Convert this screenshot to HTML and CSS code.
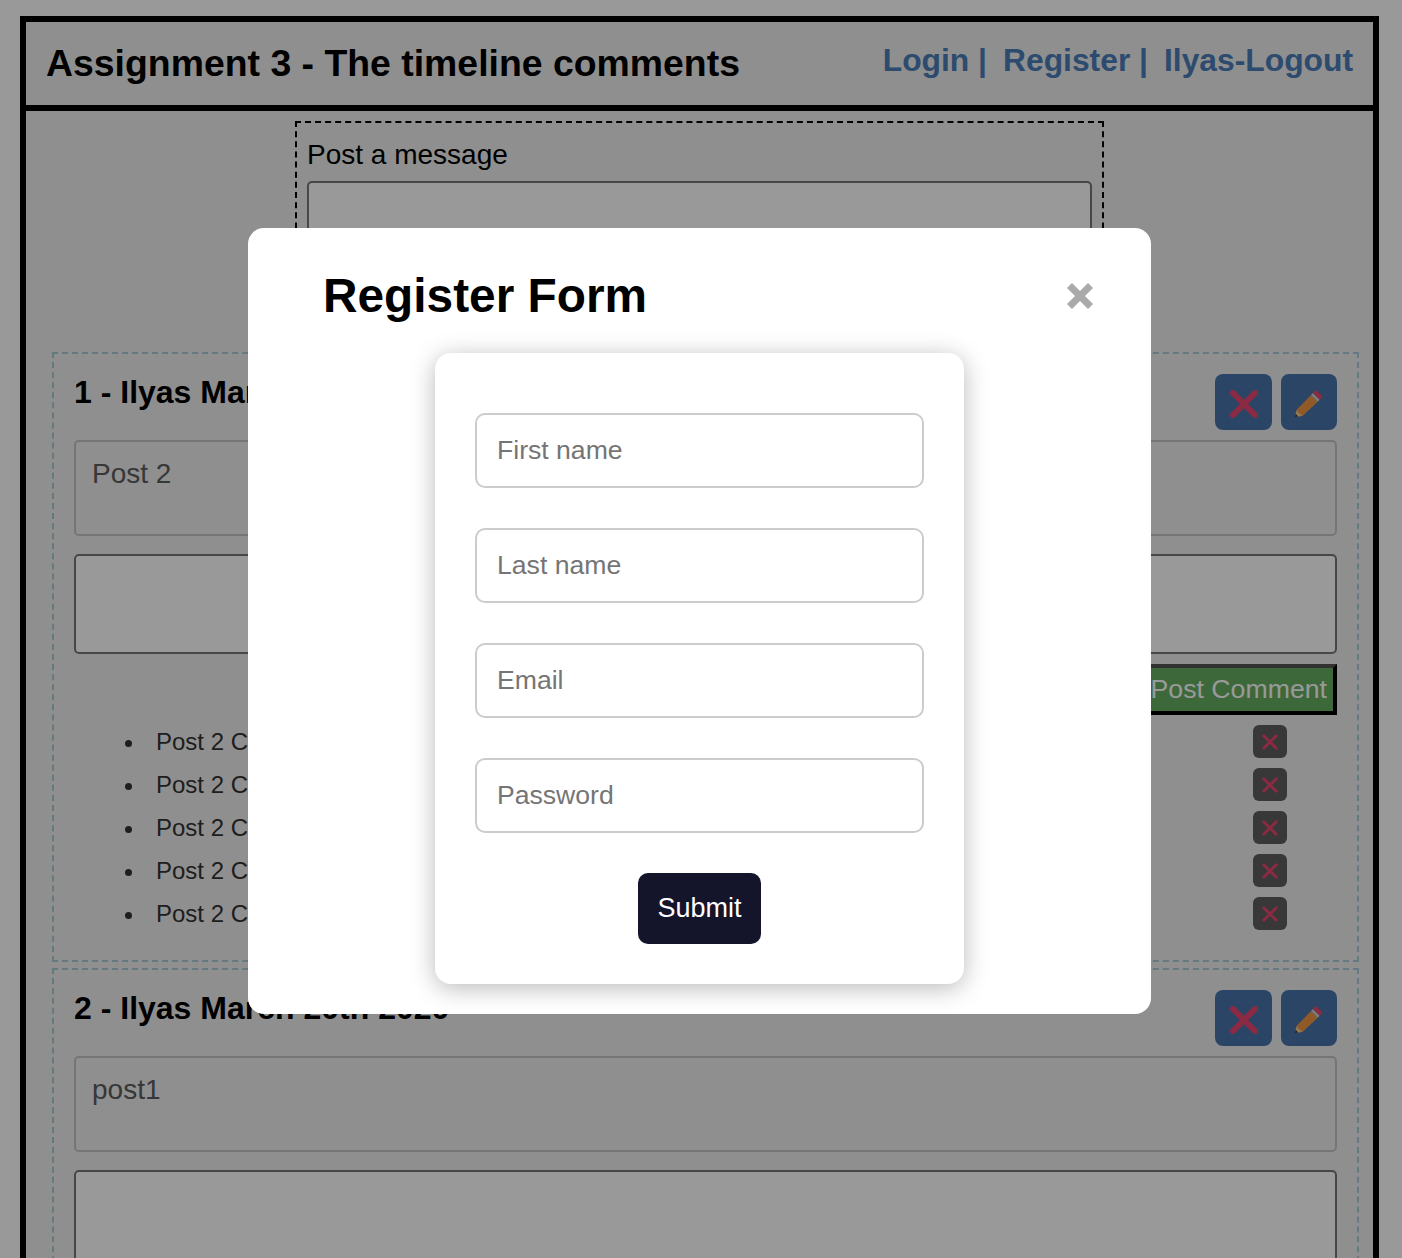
FILE: index.html
```html
<!DOCTYPE html>
<html lang="en">
<head>
  <meta charset="UTF-8" />
  <title>Assignment 3 - The timeline comments</title>
  <link rel="stylesheet" href="styles.css">
</head>
<body>

  <div class="page">
    <header class="top-bar">
      <h1>Assignment 3 - The timeline comments</h1>
      <nav class="top-links">
        <a href="#">Login |</a>
        <a href="#">Register |</a>
        <a href="#">Ilyas-Logout</a>
      </nav>
    </header>

    <main>
      <form class="post-form">
        <label for="new-post">Post a message</label>
        <textarea id="new-post"></textarea>
      </form>

      <!-- Post 1 -->
      <section class="post">
        <div class="post-head">
          <h3>1 - Ilyas March 20th 2020</h3>
          <div class="post-actions">
            <button type="button" class="icon-button wide"><svg class="icon-x" viewBox="0 0 28 28"><path d="M3 3 L25 25 M25 3 L3 25"/></svg></button>
            <button type="button" class="icon-button"><svg class="icon-pencil" viewBox="0 0 28 28"><path class="pencil-body" d="M16 6 L22.700 12.700 L7.500 27 L1.500 21 Z"/><path class="pencil-band" d="M18 4 L24.700 10.700 L22.700 12.700 L16 6 Z"/><path class="pencil-rubber" d="M21 1 L27.700 7.700 L24.700 10.700 L18 4 Z"/><path class="pencil-wood" d="M1.500 21 L7.500 27 L0 28 Z"/><path class="pencil-tip" d="M0 28 L0.700 25 L3 27.500 Z"/></svg></button>
          </div>
        </div>
        <div class="post-text">Post 2</div>
        <textarea class="comment-box"></textarea>
        <div class="comment-submit"><button type="button" class="post-comment">Post Comment</button></div>
        <ul class="comments">
          <li><button type="button" class="comment-delete"><svg class="icon-x" viewBox="0 0 28 28"><path d="M3 3 L25 25 M25 3 L3 25"/></svg></button>Post 2 Comment 5</li>
          <li><button type="button" class="comment-delete"><svg class="icon-x" viewBox="0 0 28 28"><path d="M3 3 L25 25 M25 3 L3 25"/></svg></button>Post 2 Comment 4</li>
          <li><button type="button" class="comment-delete"><svg class="icon-x" viewBox="0 0 28 28"><path d="M3 3 L25 25 M25 3 L3 25"/></svg></button>Post 2 Comment 3</li>
          <li><button type="button" class="comment-delete"><svg class="icon-x" viewBox="0 0 28 28"><path d="M3 3 L25 25 M25 3 L3 25"/></svg></button>Post 2 Comment 2</li>
          <li><button type="button" class="comment-delete"><svg class="icon-x" viewBox="0 0 28 28"><path d="M3 3 L25 25 M25 3 L3 25"/></svg></button>Post 2 Comment 1</li>
        </ul>
      </section>

      <!-- Post 2 -->
      <section class="post">
        <div class="post-head">
          <h3>2 - Ilyas March 20th 2020</h3>
          <div class="post-actions">
            <button type="button" class="icon-button wide"><svg class="icon-x" viewBox="0 0 28 28"><path d="M3 3 L25 25 M25 3 L3 25"/></svg></button>
            <button type="button" class="icon-button"><svg class="icon-pencil" viewBox="0 0 28 28"><path class="pencil-body" d="M16 6 L22.700 12.700 L7.500 27 L1.500 21 Z"/><path class="pencil-band" d="M18 4 L24.700 10.700 L22.700 12.700 L16 6 Z"/><path class="pencil-rubber" d="M21 1 L27.700 7.700 L24.700 10.700 L18 4 Z"/><path class="pencil-wood" d="M1.500 21 L7.500 27 L0 28 Z"/><path class="pencil-tip" d="M0 28 L0.700 25 L3 27.500 Z"/></svg></button>
          </div>
        </div>
        <div class="post-text">post1</div>
        <textarea class="comment-box"></textarea>
      </section>
    </main>
  </div>

  <!-- Register Modal -->
  <div class="modal-back">
    <div class="modal">
      <div class="modal-head">
        <h2>Register Form</h2>
        <button type="button" class="modal-close" aria-label="Close"><svg viewBox="0 0 28 28"><path d="M3.500 3.500 L24.500 24.500 M24.500 3.500 L3.500 24.500"/></svg></button>
      </div>
      <form class="register-form">
        <input type="text" placeholder="First name" />
        <input type="text" placeholder="Last name" />
        <input type="email" placeholder="Email" />
        <input type="password" placeholder="Password" />
        <button type="submit">Submit</button>
      </form>
    </div>
  </div>

</body>
</html>
```

FILE: styles.css
```css
html, body {
  height: 100%;
  overflow: hidden;
}

body {
  margin: 0;
  padding: 16px 23px 0 20px;
  box-sizing: border-box;
  background: white;
  font-family: "Liberation Sans", Arial, sans-serif;
  color: black;
}

.page {
  border: 6px solid black;
  background: #efefef;
}

.top-bar {
  display: flex;
  justify-content: space-between;
  height: 89px;
  padding: 0 20px;
  box-sizing: border-box;
  border-bottom: 6px solid black;
}

.top-bar h1 {
  margin: 21px 0 0;
  font-size: 37.400px;
  line-height: 41px;
}

.top-links {
  display: flex;
  gap: 16px;
  margin-top: 20px;
  font-size: 31.800px;
  font-weight: bold;
  line-height: 37px;
}

.top-links a {
  color: #4b7db8;
  text-decoration: none;
}

.post-form {
  width: 809px;
  height: 219px;
  box-sizing: border-box;
  margin: 10px auto 12px;
  padding: 12px 10px 10px;
  border: 2px dashed black;
}

.post-form label {
  display: block;
  font-size: 28px;
  line-height: 40px;
}

.post-form textarea {
  display: block;
  width: 100%;
  height: 100px;
  box-sizing: border-box;
  margin-top: 6px;
  border: 2px solid #777;
  border-radius: 5px;
  background: white;
  resize: none;
}

.post {
  margin: 0 14px 6px 26px;
  padding: 20px;
  border: 2px dashed #a9cad6;
}

.post-head {
  display: flex;
  justify-content: space-between;
  align-items: flex-start;
}

.post-head h3 {
  margin: 0;
  font-size: 32px;
  line-height: 37px;
}

.post-actions {
  display: flex;
  gap: 9px;
}

.icon-button {
  display: flex;
  align-items: center;
  justify-content: center;
  width: 56px;
  height: 56px;
  padding: 0;
  border: none;
  border-radius: 8px;
  background: #4674ab;
}

.icon-button.wide { width: 57px; }

.icon-x {
  width: 28px;
  height: 28px;
  margin-top: 3px;
  fill: none;
  stroke: #e94671;
  stroke-width: 6;
  stroke-linecap: round;
}

.icon-pencil {
  width: 28px;
  height: 28px;
  margin-top: 2px;
}

.pencil-body { fill: #f09743; }
.pencil-band { fill: #cfcfcf; }
.pencil-rubber { fill: #e94671; }
.pencil-wood { fill: #f3c684; }
.pencil-tip { fill: #222; }

.post-text {
  height: 96px;
  box-sizing: border-box;
  margin-top: 10px;
  padding: 16px;
  border: 2px solid #c4c4c4;
  border-radius: 5px;
  color: #5c5c5c;
  font-size: 28px;
  line-height: 32px;
}

.comment-box {
  display: block;
  width: 100%;
  height: 100px;
  box-sizing: border-box;
  margin-top: 18px;
  border: 2px solid #777;
  border-radius: 5px;
  background: white;
  resize: none;
}

.comment-submit {
  display: flex;
  justify-content: flex-end;
  margin-top: 10px;
}

.post-comment {
  height: 51px;
  padding: 0 6px;
  border: 4px outset black;
  background: #66ae5f;
  color: white;
  font-family: inherit;
  font-size: 26.700px;
}

.comments {
  margin: 5px 0 5px;
  padding: 0 0 0 72px;
  font-size: 24px;
  line-height: 43px;
  color: #333;
}

.comments li {
  height: 43px;
  padding-left: 10px;
}

.comment-delete {
  float: right;
  display: flex;
  align-items: center;
  justify-content: center;
  width: 34px;
  height: 33px;
  margin: 5px 50px 0 0;
  padding: 0;
  border: none;
  border-radius: 6px;
  background: #5e5e5e;
}

.comment-delete .icon-x {
  width: 18px;
  height: 18px;
  margin-top: 0;
  stroke-width: 4.500;
  stroke-linecap: butt;
}

/* overlay */
.modal-back {
  position: fixed;
  top: 0;
  left: 0;
  width: 100%;
  height: 100%;
  box-sizing: border-box;
  padding: 228px 3px 0 0;
  background: rgba(0,0,0,0.4);
  display: flex;
  justify-content: center;
  align-items: flex-start;
}

.modal {
  width: 903px;
  box-sizing: border-box;
  padding: 0 57px 30px 75px;
  background: white;
  border-radius: 16px;
}

.modal-head {
  display: flex;
  justify-content: space-between;
  align-items: center;
  height: 125px;
  box-sizing: border-box;
  padding-top: 10px;
}

.modal-head h2 {
  margin: 0;
  font-size: 47.800px;
  line-height: 55px;
}

.modal-close {
  width: 28px;
  height: 28px;
  padding: 0;
  border: none;
  background: none;
}

.modal-close svg {
  display: block;
  fill: none;
  stroke: #aaa;
  stroke-width: 7;
}

.register-form {
  display: flex;
  flex-direction: column;
  gap: 40px;
  width: 529px;
  box-sizing: border-box;
  margin-left: 112px;
  padding: 60px 40px 40px;
  border-radius: 16px;
  background: white;
  box-shadow: 0 4px 24px rgba(0,0,0,0.28);
}

.register-form input {
  height: 75px;
  box-sizing: border-box;
  padding: 0 20px 1px;
  border: 2px solid #ccc;
  border-radius: 10px;
  font-family: inherit;
  font-size: 26.600px;
}

.register-form button {
  align-self: center;
  width: 123px;
  height: 71px;
  border: none;
  border-radius: 10px;
  background: #14142b;
  color: white;
  font-family: inherit;
  font-size: 27px;
}
```
